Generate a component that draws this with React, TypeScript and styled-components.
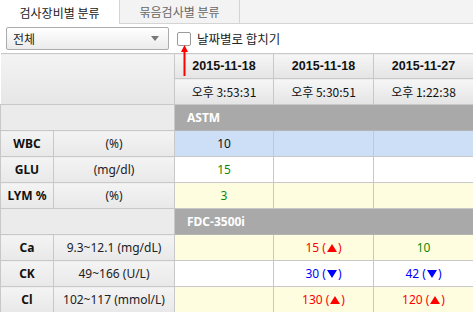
import React from "react";
import styled, { createGlobalStyle } from "styled-components";

const GlobalStyle = createGlobalStyle`
  html, body {
    margin: 0;
    padding: 0;
    background: #ffffff;
  }
  body {
    font-family: "Noto Sans CJK KR", "Noto Sans", sans-serif;
    font-size: 12px;
    color: #222;
  }
`;

type RowTone = "selected" | "plain" | "yellow";
type ValueTone = "normal" | "green" | "red" | "blue";

type Value = { num: string; tone: ValueTone; flag?: "up" | "down" };

type ResultRow = {
  name: string;
  unit: string;
  tone: RowTone;
  values: Value[];
};

type Group = {
  title: string;
  rows: ResultRow[];
};

const dates = [
  { date: "2015-11-18", time: "오후 3:53:31" },
  { date: "2015-11-18", time: "오후 5:30:51" },
  { date: "2015-11-27", time: "오후 1:22:38" },
];

const empty: Value = { num: "", tone: "normal" };

const groups: Group[] = [
  {
    title: "ASTM",
    rows: [
      { name: "WBC", unit: "(%)", tone: "selected", values: [{ num: "10", tone: "normal" }, empty, empty] },
      { name: "GLU", unit: "(mg/dl)", tone: "plain", values: [{ num: "15", tone: "green" }, empty, empty] },
      { name: "LYM %", unit: "(%)", tone: "yellow", values: [{ num: "3", tone: "green" }, empty, empty] },
    ],
  },
  {
    title: "FDC-3500i",
    rows: [
      { name: "Ca", unit: "9.3~12.1 (mg/dL)", tone: "yellow", values: [empty, { num: "15", tone: "red", flag: "up" }, { num: "10", tone: "green" }] },
      { name: "CK", unit: "49~166 (U/L)", tone: "plain", values: [empty, { num: "30", tone: "blue", flag: "down" }, { num: "42", tone: "blue", flag: "down" }] },
      { name: "Cl", unit: "102~117 (mmol/L)", tone: "yellow", values: [empty, { num: "130", tone: "red", flag: "up" }, { num: "120", tone: "red", flag: "up" }] },
    ],
  },
];

const rowBg: Record<RowTone, string> = {
  selected: "#cddff6",
  plain: "#ffffff",
  yellow: "#fefde0",
};

const valueColor: Record<ValueTone, string> = {
  normal: "#111",
  green: "#0a8a0a",
  red: "#ff0000",
  blue: "#0000ff",
};

const Page = styled.div`
  position: relative;
  width: 473px;
  height: 312px;
  overflow: hidden;
`;

const TabBar = styled.div`
  display: flex;
  height: 23px;
  background: #f3f3f3;
  border-bottom: 1px solid #d4d4d4;
`;

const Tab = styled.div<{ $active?: boolean }>`
  width: 120px;
  box-sizing: border-box;
  display: flex;
  align-items: center;
  justify-content: center;
  border-right: 1px solid #d4d4d4;
  background: ${(p) => (p.$active ? "#ffffff" : "#f3f3f3")};
  color: ${(p) => (p.$active ? "#222" : "#666")};
  height: ${(p) => (p.$active ? "24px" : "23px")};
  font-size: 12px;
  position: relative;
  z-index: 1;
`;

const Toolbar = styled.div`
  display: flex;
  align-items: center;
  height: 29px;
  padding-left: 6px;
  box-sizing: border-box;
`;

const Select = styled.div`
  width: 163px;
  height: 23px;
  box-sizing: border-box;
  border: 1px solid #acacac;
  border-radius: 2px;
  background: linear-gradient(#ffffff, #ebebeb);
  display: flex;
  align-items: center;
  justify-content: space-between;
  padding: 0 9px 0 6px;
  font-size: 12px;
  color: #222;
`;

const Caret = styled.span`
  width: 0;
  height: 0;
  border-left: 4px solid transparent;
  border-right: 4px solid transparent;
  border-top: 5px solid #777;
`;

const CheckBox = styled.span`
  width: 14px;
  height: 14px;
  box-sizing: border-box;
  border: 1px solid #9a9a9a;
  border-radius: 2px;
  background: #fff;
  margin-left: 8px;
`;

const CheckLabel = styled.span`
  margin-left: 6px;
  font-size: 12.5px;
  color: #222;
`;

const Grid = styled.table`
  width: 473px;
  border-collapse: collapse;
  table-layout: fixed;
  border-top: 1px solid #c8c8c8;
`;

const Row = styled.tr<{ $h?: number }>`
  height: ${(p) => p.$h ?? 26}px;
`;

const Corner = styled.td`
  background: linear-gradient(#f3f3f3, #e6e6e6);
  border-right: 1px solid #c8c8c8;
  border-bottom: 1px solid #c8c8c8;
  padding: 0;
`;

const HeadCell = styled.td<{ $bold?: boolean }>`
  background: linear-gradient(#f6f6f6, #e4e4e4);
  border: 1px solid #c8c8c8;
  border-top: none;
  text-align: center;
  padding: 0;
  font-family: ${(p) => (p.$bold ? '"Liberation Sans", Arial, sans-serif' : '"Noto Sans CJK KR", sans-serif')};
  font-weight: ${(p) => (p.$bold ? 700 : 400)};
  font-size: ${(p) => (p.$bold ? "12.5px" : "12px")};
  color: #111;
`;

const GroupSpacer = styled.td`
  background: #ebebeb;
  border: 1px solid #c8c8c8;
  padding: 0;
`;

const GroupTitle = styled.td`
  background: #a9a9a9;
  border: 1px solid #b4b4b4;
  color: #fff;
  font-family: "Noto Sans", sans-serif;
  font-weight: 700;
  font-size: 12px;
  padding: 0 0 0 12px;
`;

const NameCell = styled.td`
  background: linear-gradient(#f4f4f4, #e8e8e8);
  border: 1px solid #c8c8c8;
  text-align: center;
  font-family: "Noto Sans", sans-serif;
  font-weight: 700;
  font-size: 12px;
  padding: 0;
  color: #111;
`;

const UnitCell = styled.td`
  background: linear-gradient(#f4f4f4, #e8e8e8);
  border: 1px solid #c8c8c8;
  text-align: center;
  font-family: "Noto Sans", sans-serif;
  font-size: 12px;
  padding: 0;
  color: #222;
`;

const ValueCell = styled.td<{ $bg: RowTone; $tone: ValueTone }>`
  background: ${(p) => rowBg[p.$bg]};
  color: ${(p) => valueColor[p.$tone]};
  border: 1px solid #c8c8c8;
  text-align: center;
  font-family: "Noto Sans", sans-serif;
  font-size: 12px;
  padding: 0;
`;

const Flag = styled.span<{ $dir: "up" | "down" }>`
  display: inline-block;
  width: 0;
  height: 0;
  margin: 0 1px;
  vertical-align: 0;
  border-left: 5px solid transparent;
  border-right: 5px solid transparent;
  ${(p) =>
    p.$dir === "up"
      ? "border-bottom: 8px solid currentColor;"
      : "border-top: 8px solid currentColor;"}
`;

const Arrow = styled.svg`
  position: absolute;
  left: 181px;
  top: 45px;
`;

export default function App() {
  return (
    <Page>
      <GlobalStyle />
      <TabBar>
        <Tab $active>검사장비별 분류</Tab>
        <Tab>묶음검사별 분류</Tab>
      </TabBar>
      <Toolbar>
        <Select>
          <span>전체</span>
          <Caret />
        </Select>
        <CheckBox />
        <CheckLabel>날짜별로 합치기</CheckLabel>
      </Toolbar>
      <Grid>
        <colgroup>
          <col style={{ width: 53 }} />
          <col style={{ width: 121 }} />
          <col style={{ width: 99 }} />
          <col style={{ width: 100 }} />
          <col style={{ width: 100 }} />
        </colgroup>
        <tbody>
          <Row $h={25}>
            <Corner colSpan={2} rowSpan={2} />
            {dates.map((d, i) => (
              <HeadCell key={i} $bold>
                {d.date}
              </HeadCell>
            ))}
          </Row>
          <Row>
            {dates.map((d, i) => (
              <HeadCell key={i}>{d.time}</HeadCell>
            ))}
          </Row>
          {groups.map((g) => (
            <React.Fragment key={g.title}>
              <Row>
                <GroupSpacer colSpan={2} />
                <GroupTitle colSpan={3}>{g.title}</GroupTitle>
              </Row>
              {g.rows.map((r) => (
                <Row key={r.name}>
                  <NameCell>{r.name}</NameCell>
                  <UnitCell>{r.unit}</UnitCell>
                  {r.values.map((v, i) => (
                    <ValueCell key={i} $bg={r.tone} $tone={v.tone}>
                      {v.num}
                      {v.flag && (
                        <>
                          {" ("}
                          <Flag $dir={v.flag} />
                          {")"}
                        </>
                      )}
                    </ValueCell>
                  ))}
                </Row>
              ))}
            </React.Fragment>
          ))}
        </tbody>
      </Grid>
      <Arrow width="7" height="31" viewBox="0 0 7 31">
        <polygon points="3.5,0 7,7 0,7" fill="#ff0000" />
        <rect x="2.5" y="6" width="2" height="25" fill="#ff0000" />
      </Arrow>
    </Page>
  );
}
